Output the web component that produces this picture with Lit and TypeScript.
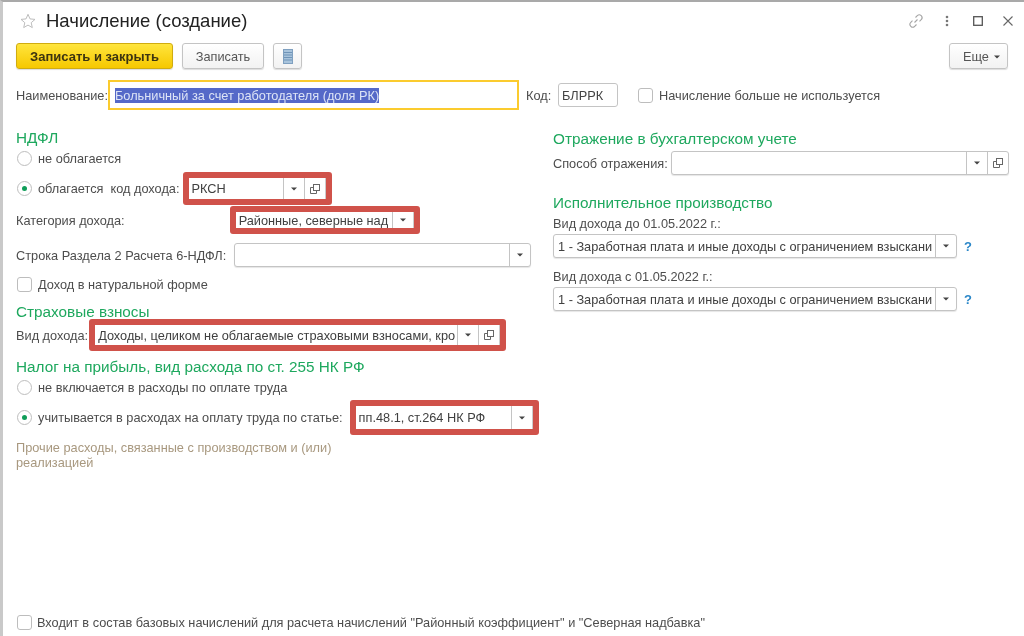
import { LitElement, html, css } from "lit";
import { customElement } from "lit/decorators.js";

const arrow = html`<svg class="tri" width="6" height="4" viewBox="0 0 6 4"><path d="M0 .5h6L3 3.500z" fill="#444"/></svg>`;
const copy = html`<svg width="12" height="12" viewBox="0 0 12 12" fill="none" stroke="#666" stroke-width="1"><rect x="4.500" y="1.500" width="6" height="6"/><path d="M4.500 4.500h-3v6h6v-3"/></svg>`;
const dd = html`<span class="btn">${arrow}</span>`;
const op = html`<span class="btn">${copy}</span>`;

@customElement("app-root")
export class AppRoot extends LitElement {
  static styles = css`
    :host { display: block; width: 1024px; height: 636px; overflow: hidden; background: #fff; font: 12.75px "Liberation Sans", Arial, sans-serif; color: #4d4d4d; }
    * { box-sizing: border-box; }
    .win { height: 636px; display: flex; flex-direction: column; border-top: 2px solid #a9a9a9; border-left: 3px solid #c9c9c9; padding-left: 13px; filter: blur(0.45px); }
    .head { height: 39px; display: flex; align-items: center; flex: none; padding-bottom: 1px; }
    .star { margin: 0 10px 0 4px; display: block; }
    .title { font-size: 18.500px; color: #222; }
    .tools { margin-left: auto; display: flex; align-items: center; padding-right: 11px; }
    .tools svg { display: block; }
    .ti1 { margin-right: 21px; }
    .ti2 { margin-right: 24px; }
    .ti3 { margin-right: 20px; }
    .bar { height: 26px; margin-top: 2px; display: flex; gap: 9px; flex: none; padding-right: 16px; }
    .b { height: 26px; border: 1px solid #c4c4c4; border-radius: 3px; background: linear-gradient(#fff, #f2f2f2); display: flex; align-items: center; justify-content: center; color: #555; box-shadow: 0 1px 1px #ddd; }
    .prim { width: 157px; background: linear-gradient(#ffe53d, #f6c800); border-color: #d0ac10; color: #3c3410; font-weight: bold; font-size: 13px; }
    .sec { width: 82px; }
    .ico { width: 29px; }
    .more { width: 59px; margin-left: auto; gap: 5px; padding-left: 6px; }
    .more .tri { margin-top: 2px; }
    .namerow { height: 30px; margin-top: 11px; display: flex; align-items: center; flex: none; }
    .nm { width: 92px; white-space: nowrap; }
    .focus { width: 411px; height: 30px; border: 2px solid #fbcb2e; display: flex; align-items: center; padding-left: 5px; }
    .sel { background: #5569c8; color: #dde4f6; height: 15px; line-height: 15px; }
    .kod { margin-left: 7px; width: 32px; }
    .code { width: 60px; height: 24px; border: 1px solid #c4c4c4; border-radius: 3px; display: flex; align-items: center; padding-left: 3px; color: #444; }
    .chk { width: 15px; height: 15px; border: 1px solid #bdbdbd; border-radius: 3px; background: #fff; flex: none; }
    .nochk { margin-left: 20px; margin-right: 6px; }
    .nc { margin-left: 1px; margin-right: 6px; }
    .cols { display: flex; flex: none; margin-top: 19px; }
    .left { width: 537px; flex: none; display: flex; flex-direction: column; }
    .right { width: 456px; flex: none; display: flex; flex-direction: column; padding-top: 1px; }
    h3 { margin: 0; font-weight: normal; font-size: 15.300px; height: 17px; line-height: 17px; color: #1ea85e; white-space: nowrap; }
    .row { display: flex; align-items: center; flex: none; white-space: nowrap; }
    .h20 { height: 20px; }
    .h18 { height: 18px; }
    .radio { width: 15px; height: 15px; border: 1px solid #bdbdbd; border-radius: 50%; margin: 0 6px 0 1px; flex: none; display: flex; align-items: center; justify-content: center; background: #fff; }
    .dot { width: 5px; height: 5px; border-radius: 50%; background: #0f9d58; }
    .field { height: 24px; border: 1px solid #c4c4c4; border-radius: 3px; display: flex; align-items: stretch; background: #fff; box-shadow: 0 1px 1px #e6e6e6; flex: none; }
    .val { flex: 1; min-width: 0; white-space: nowrap; display: flex; align-items: center; padding-left: 4px; color: #404040; }
    .mark .val { padding-left: 3px; }
    .btn { width: 21px; border-left: 1px solid #c4c4c4; display: flex; align-items: center; justify-content: center; flex: none; }
    .mark { border: 6px solid #d0524a; border-radius: 3px; flex: none; display: block; }
    .mark .field { height: 100%; border: none; border-right: 1px solid #ccc; border-radius: 0; box-shadow: none; width: 100%; }
    .m1 { width: 149px; height: 33px; margin-left: 3px; }
    .m2 { width: 190px; height: 28px; margin-left: 105px; }
    .m3 { width: 417px; height: 32px; margin-left: 1px; margin-top: -1px; }
    .m4 { width: 189px; height: 35px; margin-left: 7px; }
    .gap-code { margin-left: 7px; }
    .mt1 { margin-top: 1px; }
    .mt2 { margin-top: 2px; }
    .mt3 { margin-top: 3px; }
    .mt4 { margin-top: 4px; }
    .mt7 { margin-top: 7px; }
    .mt8 { margin-top: 8px; }
    .mt9 { margin-top: 9px; }
    .mt10 { margin-top: 10px; }
    .mt19 { margin-top: 19px; }
    .f1 { width: 297px; margin-left: 8px; }
    .note { margin-top: 5px; width: 330px; line-height: 15px; color: #a8987f; }
    .s1 { width: 118px; flex: none; white-space: nowrap; }
    .f2 { width: 338px; }
    .f3 { width: 404px; }
    .q { margin-left: 7px; color: #2b87c8; font-weight: bold; font-size: 13px; }
    .foot { margin-top: auto; margin-bottom: 5px; height: 18px; display: flex; align-items: center; gap: 5px; white-space: nowrap; }
    .foot .chk { margin-left: 1px; }
  `;

  render() {
    return html`<div class="win">
      <div class="head">
        <svg class="star" width="16" height="16" viewBox="0 0 16 16"><path d="M8 1.300l2 4.600 5 .5-3.800 3.300 1.100 4.900L8 12.100l-4.300 2.500 1.100-4.900L1 6.400l5-.5z" fill="none" stroke="#bdbdbd" stroke-width="1"/></svg>
        <span class="title">Начисление (создание)</span>
        <span class="tools">
          <svg class="ti1" width="16" height="16" viewBox="0 0 16 16" fill="none" stroke="#a5a5a5" stroke-width="1.100"><path d="M6.500 9.500l3-3"/><path d="M7.500 4.500l1.800-1.800a2.700 2.700 0 0 1 3.900 3.900L11.500 8.300"/><path d="M8.500 11.500l-1.800 1.800a2.700 2.700 0 0 1-3.900-3.900L4.500 7.700"/></svg>
          <svg class="ti2" width="4" height="12" viewBox="0 0 4 12" fill="#777"><circle cx="2" cy="2" r="1.300"/><circle cx="2" cy="6" r="1.300"/><circle cx="2" cy="10" r="1.300"/></svg>
          <svg class="ti3" width="10" height="10" viewBox="0 0 10 10" fill="none" stroke="#555" stroke-width="1.300"><rect x=".7" y=".7" width="8.600" height="8.600"/></svg>
          <svg width="10" height="10" viewBox="0 0 10 10" fill="none" stroke="#666" stroke-width="1.100"><path d="M.5.500l9 9M9.500.500l-9 9"/></svg>
        </span>
      </div>
      <div class="bar">
        <div class="b prim">Записать и закрыть</div>
        <div class="b sec">Записать</div>
        <div class="b ico"><svg width="10" height="15" viewBox="0 0 10 15"><rect x=".5" y=".5" width="9" height="14" fill="#a9c4dc" stroke="#7fa0c0"/><path d="M1 3.500h8M1 6h8M1 8.500h8M1 11h8" stroke="#6f94b8"/></svg></div>
        <div class="b more">Еще ${arrow}</div>
      </div>
      <div class="namerow">
        <span class="nm">Наименование:</span>
        <div class="focus"><span class="sel">Больничный за счет работодателя (доля РК)</span></div>
        <span class="kod">Код:</span>
        <div class="code">БЛРРК</div>
        <span class="chk nochk"></span>
        <span>Начисление больше не используется</span>
      </div>
      <div class="cols">
        <div class="left">
          <h3>НДФЛ</h3>
          <div class="row h20 mt2"><span class="radio"></span>не облагается</div>
          <div class="row mt4">
            <span class="radio"><span class="dot"></span></span>облагается<span class="gap-code">код дохода:</span>
            <span class="mark m1"><span class="field"><span class="val">РКСН</span>${dd}${op}</span></span>
          </div>
          <div class="row mt1">Категория дохода:
            <span class="mark m2"><span class="field"><span class="val">Районные, северные над</span>${dd}</span></span>
          </div>
          <div class="row mt9">Строка Раздела 2 Расчета 6-НДФЛ:
            <span class="field f1"><span class="val"></span>${dd}</span>
          </div>
          <div class="row h18 mt8"><span class="chk nc"></span>Доход в натуральной форме</div>
          <h3 class="mt10">Страховые взносы</h3>
          <div class="row">Вид дохода:
            <span class="mark m3"><span class="field"><span class="val">Доходы, целиком не облагаемые страховыми взносами, кро</span>${dd}${op}</span></span>
          </div>
          <h3 class="mt7">Налог на прибыль, вид расхода по ст. 255 НК РФ</h3>
          <div class="row h20 mt2"><span class="radio"></span>не включается в расходы по оплате труда</div>
          <div class="row mt3"><span class="radio"><span class="dot"></span></span>учитывается в расходах на оплату труда по статье:
            <span class="mark m4"><span class="field"><span class="val">пп.48.1, ст.264 НК РФ</span>${dd}</span></span>
          </div>
          <div class="note">Прочие расходы, связанные с производством и (или) реализацией</div>
        </div>
        <div class="right">
          <h3>Отражение в бухгалтерском учете</h3>
          <div class="row mt4"><span class="s1">Способ отражения:</span><span class="field f2"><span class="val"></span>${dd}${op}</span></div>
          <h3 class="mt19">Исполнительное производство</h3>
          <div class="row h18 mt3">Вид дохода до 01.05.2022 г.:</div>
          <div class="row mt2"><span class="field f3"><span class="val">1 - Заработная плата и иные доходы с ограничением взыскани</span>${dd}</span><span class="q">?</span></div>
          <div class="row h18 mt9">Вид дохода с 01.05.2022 г.:</div>
          <div class="row mt2"><span class="field f3"><span class="val">1 - Заработная плата и иные доходы с ограничением взыскани</span>${dd}</span><span class="q">?</span></div>
        </div>
      </div>
      <div class="foot"><span class="chk"></span>Входит в состав базовых начислений для расчета начислений "Районный коэффициент" и "Северная надбавка"</div>
    </div>`;
  }
}
